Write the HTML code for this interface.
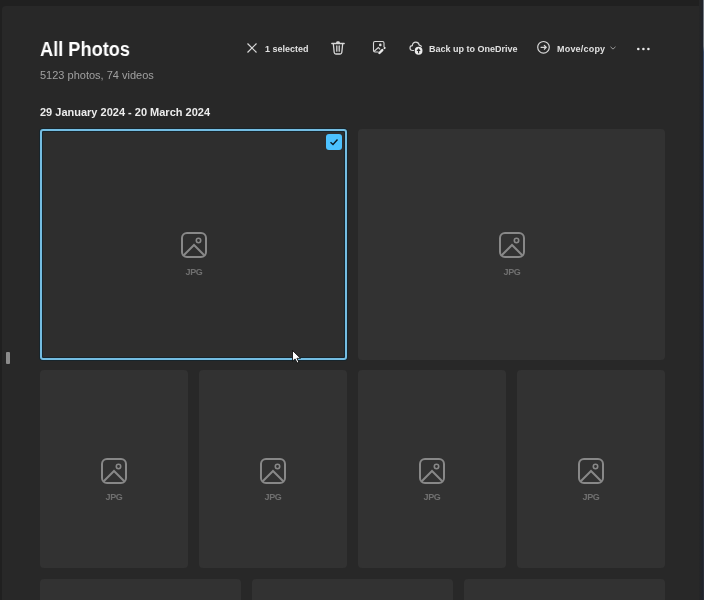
<!DOCTYPE html>
<html><head><meta charset="utf-8">
<style>
html,body{margin:0;padding:0;width:704px;height:600px;overflow:hidden;background:#202020;font-family:"Liberation Sans",sans-serif;}
#panel{position:absolute;left:1.5px;top:5.5px;width:703px;height:595px;background:#282828;border-top-left-radius:4px;}
#rstrip{position:absolute;left:699px;top:0;width:4px;height:600px;background:linear-gradient(to right,#262626,#1f232b);}
#rline{position:absolute;left:703px;top:0;width:1px;height:600px;background:linear-gradient(to bottom,#737a82 0,#737a82 46px,#3e4f6e 52px,#384363 300px,#2e3448 460px,#292c35 600px);}
.t{position:absolute;white-space:nowrap;will-change:transform;line-height:1;}
#title{left:40px;top:39px;font-size:20px;font-weight:700;color:#ffffff;transform:scaleX(0.91);transform-origin:0 0;}
#sub{left:40px;top:70px;font-size:11px;color:#a0a0a0;}
#date{left:40px;top:107px;font-size:11px;font-weight:700;color:#ececec;}
.tb{font-size:9px;font-weight:700;color:#e0e0e0;top:45px;}
.tile{position:absolute;background:#323232;border-radius:4px;}
.sel{position:absolute;left:40px;top:129px;width:302.75px;height:226.5px;border:2px solid #74bde2;border-radius:3px;background:#2e2e2e;box-shadow:0 0 0 1px #17252c, inset 0 0 0 1px #17252c;}
.jpg{position:absolute;font-size:9px;font-weight:700;color:#707070;text-align:center;width:40px;letter-spacing:-0.4px;}
svg{position:absolute;overflow:visible;}
</style></head><body>
<div id="panel"></div>
<div id="rstrip"></div>
<div id="rline"></div>

<div class="t" id="title">All Photos</div>
<div class="t" id="sub">5123 photos, 74 videos</div>
<div class="t" id="date">29 January 2024 - 20 March 2024</div>

<!-- toolbar -->
<svg style="left:247px;top:42.5px" width="10" height="10" viewBox="0 0 10 10"><path d="M0.5 0.5L9.5 9.5M9.5 0.5L0.5 9.5" stroke="#d8d8d8" stroke-width="1.2" fill="none"/></svg>
<div class="t tb" style="left:265px">1 selected</div>

<svg style="left:331px;top:40px" width="14" height="15" viewBox="0 0 14 15"><path d="M0.8 3.5H13.2M2.3 3.5L3.2 12.5Q3.4 14 4.9 14H9.1Q10.6 14 10.8 12.5L11.7 3.5M5.8 6V11.2M8.2 6V11.2" stroke="#d8d8d8" stroke-width="1.3" fill="none" stroke-linecap="round"/><path d="M5 3.5Q5 1.2 6.2 1.2H7.8Q9 1.2 9 3.5Z" fill="#d8d8d8"/></svg>

<svg style="left:372px;top:40px" width="15" height="15" viewBox="0 0 15 15"><path d="M6.5 12H3Q1.5 12 1.5 10.5V3Q1.5 1.5 3 1.5H10.5Q12 1.5 12 3V7" stroke="#d8d8d8" stroke-width="1.1" fill="none"/><circle cx="8.3" cy="4.9" r="1.3" fill="#e0e0e0"/><path d="M2 11.5L6.3 7.6L8.2 9.3" stroke="#d8d8d8" stroke-width="1.1" fill="none"/><path d="M7.4 13L10.3 10.1" stroke="#e8e8e8" stroke-width="2.4" stroke-linecap="round"/><path d="M12.5 8.1L12.7 7.9" stroke="#e8e8e8" stroke-width="2" stroke-linecap="round"/></svg>

<svg style="left:409px;top:40px" width="15" height="15" viewBox="0 0 15 15"><path d="M5 10.5H3.5Q1 10.5 1 8Q1 5.8 3.3 5.6Q3.8 2.2 6.8 2.2Q9.6 2.2 10.3 5.2Q12.2 5.6 12.6 6.8" stroke="#d8d8d8" stroke-width="1.2" fill="none"/><circle cx="9.6" cy="10.75" r="3.9" fill="#ececec"/><path d="M9.6 13.2V8.8" stroke="#2a2a2a" stroke-width="1.1" fill="none"/><path d="M7.5 10.9L9.6 8.3L11.7 10.9Z" fill="#2a2a2a"/></svg>
<div class="t tb" style="left:429px">Back up to OneDrive</div>

<svg style="left:536.5px;top:41.3px" width="13" height="13" viewBox="0 0 13 13"><circle cx="6.5" cy="6.3" r="5.8" stroke="#d8d8d8" stroke-width="1.2" fill="none"/><path d="M3.6 6.3H9.2M7 4.1L9.2 6.3L7 8.5" stroke="#d8d8d8" stroke-width="1.2" fill="none"/></svg>
<div class="t tb" style="left:557px;letter-spacing:0.2px">Move/copy</div>
<svg style="left:610px;top:46px" width="6" height="4" viewBox="0 0 6 4"><path d="M0.5 0.8L3 3.1L5.5 0.8" stroke="#9a9a9a" stroke-width="1" fill="none"/></svg>
<svg style="left:636px;top:46.6px" width="15" height="4" viewBox="0 0 15 4"><circle cx="2.3" cy="2" r="1.3" fill="#e8e8e8"/><circle cx="7.4" cy="2" r="1.3" fill="#e8e8e8"/><circle cx="12.4" cy="2" r="1.3" fill="#e8e8e8"/></svg>

<!-- row 1 -->
<div class="sel"></div>
<div class="tile" style="left:358.25px;top:129px;width:306.75px;height:230.5px"></div>
<svg style="left:326px;top:134px" width="16" height="16" viewBox="0 0 16 16"><rect x="0" y="0" width="16" height="16" rx="3" fill="#4cc2ff"/><path d="M4.5 8.2L7 10.5L11.5 5.5" stroke="#0b1a24" stroke-width="1.4" fill="none"/></svg>

<!-- row 2 -->
<div class="tile" style="left:40px;top:370px;width:147.6px;height:198px"></div>
<div class="tile" style="left:199.1px;top:370px;width:147.6px;height:198px"></div>
<div class="tile" style="left:358.25px;top:370px;width:147.6px;height:198px"></div>
<div class="tile" style="left:517.4px;top:370px;width:147.6px;height:198px"></div>

<!-- row 3 -->
<div class="tile" style="left:40px;top:578.5px;width:200.7px;height:40px"></div>
<div class="tile" style="left:252.2px;top:578.5px;width:200.7px;height:40px"></div>
<div class="tile" style="left:464.3px;top:578.5px;width:200.7px;height:40px"></div>

<!-- placeholders -->
<svg style="left:181px;top:232px" width="26" height="26" viewBox="0 0 26 26"><rect x="1" y="1" width="24" height="24" rx="5" stroke="#888" stroke-width="2" fill="none"/><circle cx="17.5" cy="8.5" r="2.2" stroke="#888" stroke-width="1.6" fill="none"/><path d="M2.5 23.5L13 13L23.5 23.5" stroke="#888" stroke-width="2" fill="none"/></svg>
<div class="jpg t" style="left:174px;top:268px">JPG</div>

<svg style="left:499px;top:232px" width="26" height="26" viewBox="0 0 26 26"><rect x="1" y="1" width="24" height="24" rx="5" stroke="#888" stroke-width="2" fill="none"/><circle cx="17.5" cy="8.5" r="2.2" stroke="#888" stroke-width="1.6" fill="none"/><path d="M2.5 23.5L13 13L23.5 23.5" stroke="#888" stroke-width="2" fill="none"/></svg>
<div class="jpg t" style="left:492px;top:268px">JPG</div>

<svg style="left:101px;top:457.5px" width="26" height="26" viewBox="0 0 26 26"><rect x="1" y="1" width="24" height="24" rx="5" stroke="#888" stroke-width="2" fill="none"/><circle cx="17.5" cy="8.5" r="2.2" stroke="#888" stroke-width="1.6" fill="none"/><path d="M2.5 23.5L13 13L23.5 23.5" stroke="#888" stroke-width="2" fill="none"/></svg>
<div class="jpg t" style="left:94px;top:493px">JPG</div>

<svg style="left:260px;top:457.5px" width="26" height="26" viewBox="0 0 26 26"><rect x="1" y="1" width="24" height="24" rx="5" stroke="#888" stroke-width="2" fill="none"/><circle cx="17.5" cy="8.5" r="2.2" stroke="#888" stroke-width="1.6" fill="none"/><path d="M2.5 23.5L13 13L23.5 23.5" stroke="#888" stroke-width="2" fill="none"/></svg>
<div class="jpg t" style="left:253px;top:493px">JPG</div>

<svg style="left:419px;top:457.5px" width="26" height="26" viewBox="0 0 26 26"><rect x="1" y="1" width="24" height="24" rx="5" stroke="#888" stroke-width="2" fill="none"/><circle cx="17.5" cy="8.5" r="2.2" stroke="#888" stroke-width="1.6" fill="none"/><path d="M2.5 23.5L13 13L23.5 23.5" stroke="#888" stroke-width="2" fill="none"/></svg>
<div class="jpg t" style="left:412px;top:493px">JPG</div>

<svg style="left:578px;top:457.5px" width="26" height="26" viewBox="0 0 26 26"><rect x="1" y="1" width="24" height="24" rx="5" stroke="#888" stroke-width="2" fill="none"/><circle cx="17.5" cy="8.5" r="2.2" stroke="#888" stroke-width="1.6" fill="none"/><path d="M2.5 23.5L13 13L23.5 23.5" stroke="#888" stroke-width="2" fill="none"/></svg>
<div class="jpg t" style="left:571px;top:493px">JPG</div>

<!-- left small bar -->
<div style="position:absolute;left:6px;top:352px;width:4px;height:12px;background:#8c8c8c;border-radius:1px"></div>

<!-- cursor -->
<svg style="left:292.3px;top:350.3px" width="10" height="15" viewBox="0 0 10 15"><path d="M0.5 0.5V11.2L3.1 8.9L5.2 13L6.9 12.3L4.9 8.3H8.5Z" fill="#ffffff" stroke="#000" stroke-width="0.8"/></svg>
</body></html>
